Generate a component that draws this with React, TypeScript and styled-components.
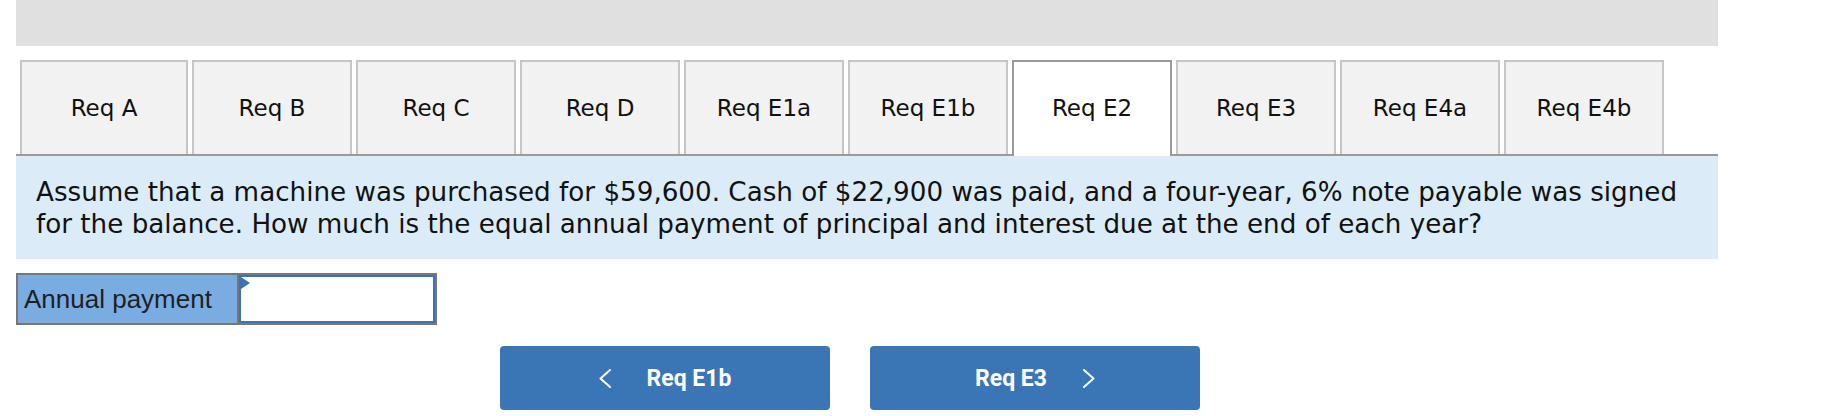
import styled, { createGlobalStyle } from "styled-components";

const GlobalStyle = createGlobalStyle`
  html, body {
    margin: 0;
    padding: 0;
    background: #ffffff;
    font-family: "DejaVu Sans", Verdana, sans-serif;
  }
`;

const Page = styled.div`
  width: 1702px;
  margin-left: 16px;
`;

const TopBar = styled.div`
  height: 46px;
  background: #e0e0e0;
`;

const TabStrip = styled.div`
  margin-top: 14px;
  display: flex;
  align-items: flex-start;
  gap: 4px;
  padding-left: 4px;
  border-bottom: 2px solid #9a9a9a;
`;

const Tab = styled.button<{ $active?: boolean; $wide?: boolean }>`
  box-sizing: border-box;
  width: ${(p) => (p.$wide ? "168px" : "160px")};
  height: ${(p) => (p.$active ? "96px" : "94px")};
  margin-bottom: ${(p) => (p.$active ? "-2px" : "0")};
  position: relative;
  z-index: ${(p) => (p.$active ? 1 : 0)};
  border: 2px solid ${(p) => (p.$active ? "#9a9a9a" : "#c6c6c6")};
  border-bottom: none;
  background: ${(p) => (p.$active ? "#ffffff" : "#f2f2f2")};
  color: #111;
  font-family: "DejaVu Sans", Verdana, sans-serif;
  font-size: 23px;
  padding: 0 0 ${(p) => (p.$active ? "2px" : "0")};
  cursor: pointer;
`;

const Question = styled.div`
  background: #dbecf8;
  padding: 20px 18px 19px 20px;
  font-size: 26.2px;
  line-height: 32px;
  color: #111;
`;

const AnswerTable = styled.div`
  margin-top: 14px;
  display: flex;
  width: fit-content;
  border: 2px solid #777777;
`;

const LabelCell = styled.div`
  box-sizing: border-box;
  width: 221px;
  height: 48px;
  border-right: 2px solid #777777;
  background: #79ade2;
  display: flex;
  align-items: center;
  padding-left: 6px;
  font-family: "Liberation Sans", Arial, sans-serif;
  font-size: 26px;
  color: #1f1f1f;
`;

const InputCell = styled.div`
  position: relative;
  box-sizing: border-box;
  width: 196px;
  height: 48px;
  border: 2px solid #3a74b7;
  background: #ffffff;
`;

const Marker = styled.div`
  position: absolute;
  left: 0;
  top: 0;
  width: 0;
  height: 0;
  border-top: 6px solid transparent;
  border-bottom: 6px solid transparent;
  border-left: 9px solid #3a74b7;
`;

const AnswerInput = styled.input`
  box-sizing: border-box;
  width: 100%;
  height: 100%;
  border: none;
  outline: none;
  background: transparent;
  font-size: 22px;
  padding: 0 8px;
`;

const Nav = styled.div`
  margin-top: 21px;
  display: flex;
  justify-content: center;
  gap: 40px;
  padding-right: 34px;
`;

const NavButton = styled.button`
  width: 330px;
  height: 64px;
  border: none;
  border-radius: 4px;
  background: #3a75b6;
  color: #ffffff;
  display: flex;
  align-items: center;
  justify-content: center;
  gap: 36px;
  font-family: Roboto, "Liberation Sans", sans-serif;
  font-weight: 700;
  font-size: 23px;
  cursor: pointer;
`;

const Chevron = ({ dir }: { dir: "left" | "right" }) => (
  <svg width="12" height="19" viewBox="0 0 12 19" fill="none">
    <polyline
      points={dir === "left" ? "11,1 1.5,9.5 11,18" : "1,1 10.5,9.5 1,18"}
      stroke="#ffffff"
      strokeWidth="2"
      strokeLinecap="round"
      strokeLinejoin="round"
    />
  </svg>
);

const tabs = [
  "Req A",
  "Req B",
  "Req C",
  "Req D",
  "Req E1a",
  "Req E1b",
  "Req E2",
  "Req E3",
  "Req E4a",
  "Req E4b",
];

export default function App() {
  const active = "Req E2";
  return (
    <>
      <GlobalStyle />
      <Page>
        <TopBar />
        <TabStrip>
          {tabs.map((t, i) => (
            <Tab key={t} $active={t === active} $wide={i === 0}>
              {t}
            </Tab>
          ))}
        </TabStrip>
        <Question>
          Assume that a machine was purchased for $59,600. Cash of $22,900 was paid, and a
          four-year, 6% note payable was signed for the balance. How much is the equal annual
          payment of principal and interest due at the end of each year?
        </Question>
        <AnswerTable>
          <LabelCell>Annual payment</LabelCell>
          <InputCell>
            <Marker />
            <AnswerInput type="text" />
          </InputCell>
        </AnswerTable>
        <Nav>
          <NavButton>
            <Chevron dir="left" />
            <span>Req E1b</span>
          </NavButton>
          <NavButton>
            <span>Req E3</span>
            <Chevron dir="right" />
          </NavButton>
        </Nav>
      </Page>
    </>
  );
}
